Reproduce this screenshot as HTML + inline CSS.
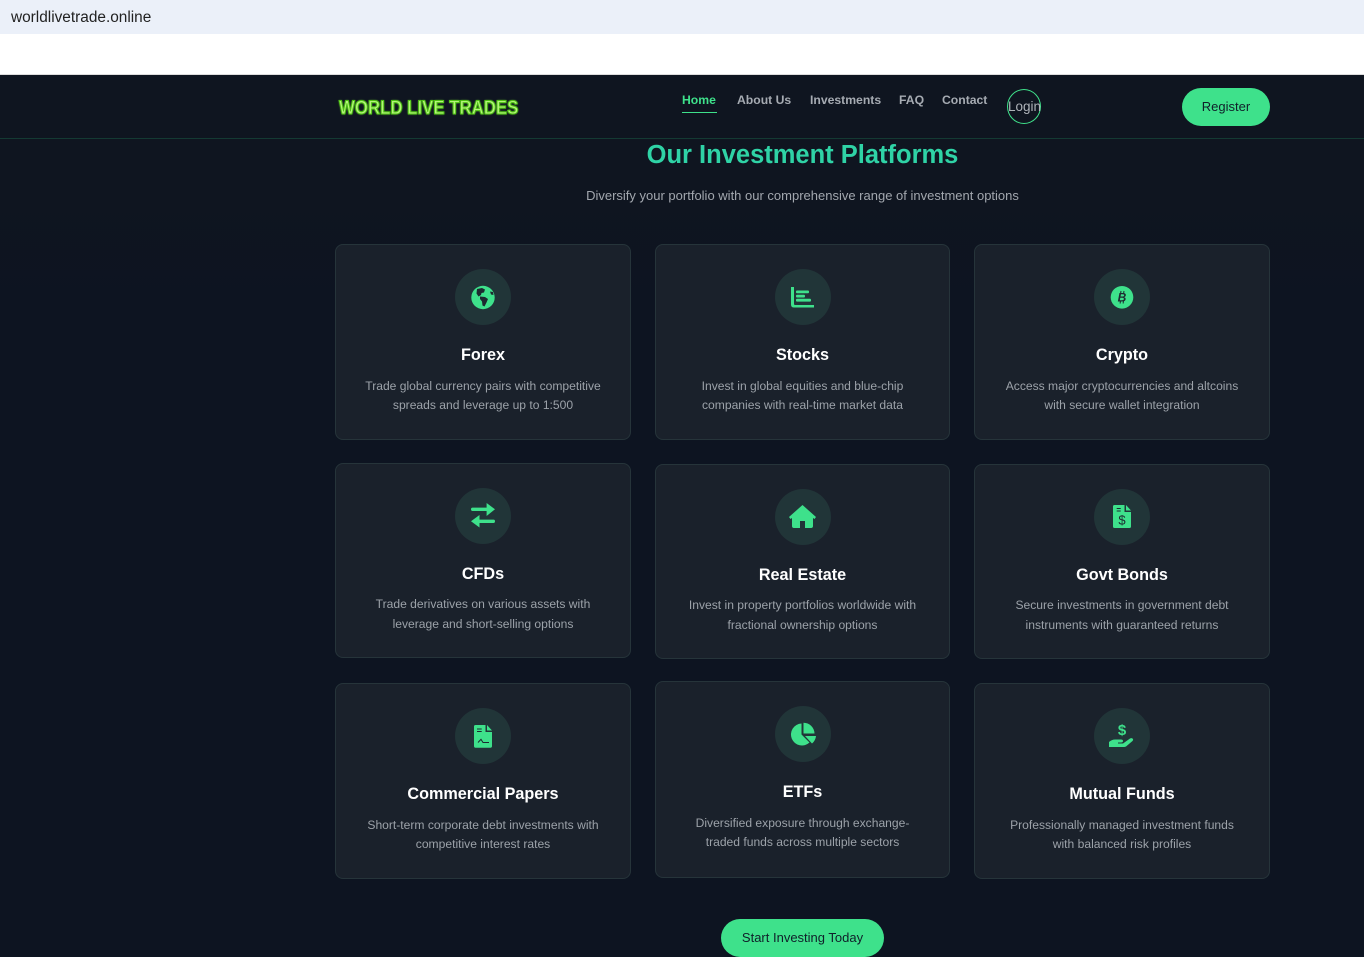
<!DOCTYPE html>
<html><head><meta charset="utf-8"><title>World Live Trades</title>
<style>
*{box-sizing:border-box;margin:0;padding:0}
html,body{width:1364px;height:957px;overflow:hidden;background:linear-gradient(#0f1520 0,#0f1520 200px,#0d1421 300px);font-family:"Liberation Sans","Noto Sans CJK SC",sans-serif}
.abs{position:absolute}
#top{position:absolute;left:0;top:0;width:1364px;height:34px;background:#ebf0f9}
#white{position:absolute;left:0;top:34px;width:1364px;height:41px;background:#fff;border-bottom:1px solid #ddd}
#url{position:absolute;left:11px;top:8px;font-size:15.4px;line-height:20px;color:#222;white-space:nowrap}
#navline{position:absolute;left:0;top:138px;width:1364px;height:1px;background:#143a33}
#logo{position:absolute;left:339px;top:98px;height:22px;font:900 19px/22px "Liberation Sans",sans-serif;color:#b4f47a;-webkit-text-stroke:1px #4fc414;text-shadow:0 0 2px #7cff30;white-space:nowrap;transform:scaleX(.885);transform-origin:0 50%}
.nav{position:absolute;top:92px;font-size:12.2px;line-height:16px;font-weight:700;color:#a6abb2;white-space:nowrap}
#login{position:absolute;left:1007px;top:89px;width:34px;height:35px;border:1px solid #3fe08a;border-radius:50%;font-size:13.5px;line-height:33px;color:#aeb3b9;text-align:center;white-space:nowrap}
#reg{position:absolute;left:1182px;top:88px;width:88px;height:38px;background:#3ee18b;border-radius:19px;font-size:13px;line-height:38px;color:#10202a;text-align:center}
h1{position:absolute;left:335px;width:935px;top:139px;text-align:center;font-size:25.5px;line-height:32px;font-weight:700;color:#2fd3a6;white-space:nowrap}
#sub{position:absolute;left:335px;width:935px;top:187px;text-align:center;font-size:13px;line-height:18px;color:#a2a7ae;white-space:nowrap}
.card{position:absolute;background:#1a212b;border:1px solid #26343a;border-radius:8px;text-align:center}
.circ{position:absolute;left:50%;margin-left:-28px;top:24px;width:56px;height:56px;border-radius:50%;background:#213538}
.circ svg{position:absolute;left:14px;top:14px;width:28px;height:28px}
.card h3{position:absolute;left:0;right:0;top:100px;font-size:16.2px;line-height:20px;font-weight:700;color:#fff;white-space:nowrap}
.card p{position:absolute;left:0;right:0;top:132px;font-size:12.1px;line-height:19px;color:#9ca2a9;white-space:nowrap}
.card p.r2{top:131px;line-height:19.5px}
#cta{position:absolute;left:721px;top:919px;width:163px;height:38px;background:#3ee18b;border-radius:19px;font-size:13px;line-height:38px;color:#10202a;text-align:center}
</style></head><body>
<div id="top"><div id="url">worldlivetrade.online</div></div>
<div id="white"></div>
<div id="logo">WORLD LIVE TRADES</div>
<div class="nav" style="left:682px;color:#3ee18b">Home</div>
<div class="abs" style="left:682px;top:112px;width:35px;height:1px;background:#3ee18b"></div>
<div class="nav" style="left:737px">About Us</div>
<div class="nav" style="left:810px">Investments</div>
<div class="nav" style="left:899px">FAQ</div>
<div class="nav" style="left:942px">Contact</div>
<div id="login">Login</div>
<div id="reg">Register</div>
<div id="navline"></div>
<h1>Our Investment Platforms</h1>
<div id="sub">Diversify your portfolio with our comprehensive range of investment options</div>

<div class="card" style="left:335px;top:244px;width:296px;height:196px">
<div class="circ"><svg viewBox="0 0 28 28"><circle cx="14" cy="14.500" r="11.700" fill="#3ee18b"/><path d="M8 6l5-1 3 1.500-1 3-2.500.5-.5 2-2.500 1.500-2-3zM11 13.500l5 .5 3 2-1.500 3.500-2 4-2-1-.5-4-2-2.500zM21 8.500l3 .5.5 3-2.500-.5z" fill="#1d2a30"/></svg></div>
<h3>Forex</h3><p>Trade global currency pairs with competitive<br>spreads and leverage up to 1:500</p></div>

<div class="card" style="left:655px;top:244px;width:295px;height:196px">
<div class="circ"><svg viewBox="0 0 28 28"><path d="M2 4h3v17q0 1 1 1h19v2.500H5q-3 0-3-3z" fill="#3ee18b"/><rect x="7" y="7.500" width="13" height="2.800" rx="1" fill="#3ee18b"/><rect x="7" y="11.700" width="9" height="2.800" rx="1" fill="#3ee18b"/><rect x="7" y="15.800" width="15" height="2.800" rx="1" fill="#3ee18b"/></svg></div>
<h3>Stocks</h3><p>Invest in global equities and blue-chip<br>companies with real-time market data</p></div>

<div class="card" style="left:974px;top:244px;width:296px;height:196px">
<div class="circ"><svg viewBox="0 0 28 28"><circle cx="14" cy="14.300" r="11.300" fill="#3ee18b"/><text x="14" y="18.500" text-anchor="middle" font-family="Liberation Sans, sans-serif" font-size="12" font-weight="700" font-style="italic" fill="#1d2a30">B</text><path d="M13 8l-.4 2.500M16 8l-.4 2.500M12.500 18l-.4 2.500M15.500 18l-.4 2.500" stroke="#1d2a30" stroke-width="1"/></svg></div>
<h3>Crypto</h3><p>Access major cryptocurrencies and altcoins<br>with secure wallet integration</p></div>

<div class="card" style="left:335px;top:463px;width:296px;height:195px">
<div class="circ"><svg viewBox="0 0 28 28"><path d="M3.500 5.600H17.600V1L26 7.300 17.600 14V9H3.500Q2 9 2 7.300T3.500 5.600z" fill="#3ee18b"/><path d="M24.500 17.600H10.500V13L2 19.300 10.500 25.500V21H24.500Q26 21 26 19.300T24.500 17.600z" fill="#3ee18b"/></svg></div>
<h3>CFDs</h3><p class="r2">Trade derivatives on various assets with<br>leverage and short-selling options</p></div>

<div class="card" style="left:655px;top:464px;width:295px;height:195px">
<div class="circ"><svg viewBox="0 0 28 28"><path d="M13.500 2L27 14l-1.500 2L24 15v8q0 2-2 2h-6v-7h-5v7H5q-2 0-2-2v-8l-1.500 1L0 14z" fill="#3ee18b"/></svg></div>
<h3>Real Estate</h3><p class="r2">Invest in property portfolios worldwide with<br>fractional ownership options</p></div>

<div class="card" style="left:974px;top:464px;width:296px;height:195px">
<div class="circ"><svg viewBox="0 0 28 28"><path d="M6.500 2H16.500V9H23V23.500q0 1.500-1.500 1.500H6.500Q5 25 5 23.500V3.500Q5 2 6.500 2zM18 2l5 5.500H18z" fill="#3ee18b"/><path d="M8.700 5.500h4M8.700 8h4" stroke="#1d2a30" stroke-width="1"/><text x="14" y="21.500" text-anchor="middle" font-family="Liberation Sans, sans-serif" font-size="13" fill="#1d2a30">$</text></svg></div>
<h3>Govt Bonds</h3><p class="r2">Secure investments in government debt<br>instruments with guaranteed returns</p></div>

<div class="card" style="left:335px;top:683px;width:296px;height:196px">
<div class="circ"><svg viewBox="0 0 28 28"><path d="M6.500 3H16.500V10H23V24q0 1.700-1.500 1.700H6.500Q5 25.700 5 24V4.500Q5 3 6.500 3zM18 3l5 5.500H18z" fill="#3ee18b"/><path d="M8 7h4.700M8 9.500h4.700M9 20.500l3-3.200 2 3.200h6" stroke="#1d2a30" stroke-width="1" fill="none"/></svg></div>
<h3>Commercial Papers</h3><p>Short-term corporate debt investments with<br>competitive interest rates</p></div>

<div class="card" style="left:655px;top:681px;width:295px;height:197px">
<div class="circ"><svg viewBox="0 0 28 28"><path d="M12.500 3.500A11 11 0 1 0 20.500 22.500L12.500 14.500z" fill="#3ee18b"/><path d="M14.500 2.700A11 11 0 0 1 25.500 13.500H14.500z" fill="#3ee18b"/><path d="M16 16H27A11 11 0 0 1 23 23.500z" fill="#3ee18b"/></svg></div>
<h3>ETFs</h3><p>Diversified exposure through exchange-<br>traded funds across multiple sectors</p></div>

<div class="card" style="left:974px;top:683px;width:296px;height:196px">
<div class="circ"><svg viewBox="0 0 28 28"><text x="14" y="13" text-anchor="middle" font-family="Liberation Sans, sans-serif" font-size="15" font-weight="700" fill="#3ee18b">$</text><path d="M1 20q3-2.500 6-2.500h6q2 0 2 1.500t-2 1.500h-3v1h5l7-5q2-1 3 .5.500 1-.5 2l-6.500 5.500q-1 .5-2 .5H1z" fill="#3ee18b"/></svg></div>
<h3>Mutual Funds</h3><p>Professionally managed investment funds<br>with balanced risk profiles</p></div>

<div id="cta">Start Investing Today</div>
</body></html>
